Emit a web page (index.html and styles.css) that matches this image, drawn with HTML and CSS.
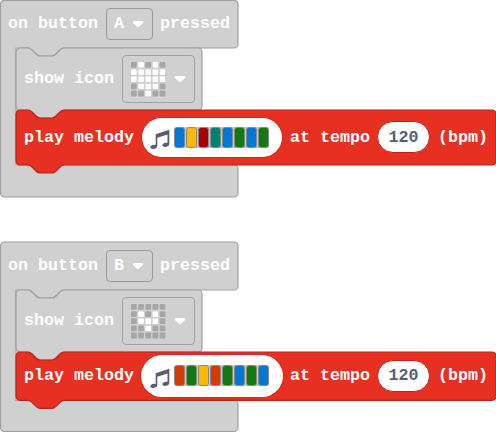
FILE: index.html
```
<!DOCTYPE html>
<html lang="en">
<head>
<meta charset="utf-8">
<title>Button melodies</title>
<link rel="stylesheet" href="styles.css">
</head>
<body>
<svg class="defs" width="0" height="0" aria-hidden="true">
  <defs>
    <symbol id="arrow" viewBox="0 0 12 8"><path d="M2 1H10Q12 1.200 11 2.900L7.600 6.300Q6 7.600 4.400 6.300L1 2.900Q0 1.200 2 1Z" fill="#fff"/></symbol>
    <symbol id="note" viewBox="0 0 20 21"><path d="M5.700 5.200 19.300.8V15.100Q19 17.800 15.600 17.900C12.600 18 11.700 16.400 12.900 14.900Q14.500 13.200 17.500 13.800V5.500L7.300 8.800V17.100Q7.100 19.700 3.600 20C.3 20.200-.4 18.300.9 16.900Q2.600 15.300 5.700 15.900Z" fill="#575e75"/></symbol>
    <rect id="led" width="5.800" height="5.800" rx="1"/>
    <g id="row"><use href="#led"/><use href="#led" x="7.150"/><use href="#led" x="14.300"/><use href="#led" x="21.450"/><use href="#led" x="28.600"/></g>
    <g id="grid" fill="#a6a6a6"><use href="#row"/><use href="#row" y="7.150"/><use href="#row" y="14.300"/><use href="#row" y="21.450"/><use href="#row" y="28.600"/></g>
  </defs>
</svg>
<main class="workspace">
  <section class="event first">
    <svg class="shape" width="240" height="198"><path d="M.5 4.300a4 4 0 0 1 4-4H234a4 4 0 0 1 4 4V44a4 4 0 0 1-4 4H64c-2 0-3 1-4 2l-4 4c-1 1-2 2-4 2H40c-2 0-3-1-4-2l-4-4c-1-1-2-2-4-2H16V165H234a4 4 0 0 1 4 4V193a4 4 0 0 1-4 4H4.500a4 4 0 0 1-4-4Z"/></svg>
    <header class="head"><span class="label">on button</span><span class="select"><span>A</span><svg class="arrow"><use href="#arrow"/></svg></span><span class="label">pressed</span></header>
    <div class="body">
      <div class="block icon-block">
        <svg class="shape" width="188" height="72"><path d="M0 4a4 4 0 0 1 4-4H12c2 0 3 1 4 2l4 4c1 1 2 2 4 2h12c2 0 3-1 4-2l4-4c1-1 2-2 4-2H182a4 4 0 0 1 4 4V58a4 4 0 0 1-4 4H48c-2 0-3 1-4 2l-4 4c-1 1-2 2-4 2H24c-2 0-3-1-4-2l-4-4c-1-1-2-2-4-2H4a4 4 0 0 1-4-4Z"/></svg>
        <span class="label">show icon</span>
        <span class="picker"><svg class="leds" viewBox="0 0 35 35"><use href="#grid"/><g fill="#fff"><use href="#led" x="7.150"/><use href="#led" x="21.450"/><use href="#row" y="7.150"/><use href="#row" y="14.300"/><use href="#led" x="7.150" y="21.450"/><use href="#led" x="14.300" y="21.450"/><use href="#led" x="21.450" y="21.450"/><use href="#led" x="14.300" y="28.600"/></g></svg><svg class="arrow"><use href="#arrow"/></svg></span>
      </div>
      <div class="block melody">
        <svg class="shape" width="481" height="65"><path d="M0 4a4 4 0 0 1 4-4H12c2 0 3 1 4 2l4 4c1 1 2 2 4 2h12c2 0 3-1 4-2l4-4c1-1 2-2 4-2H476a4 4 0 0 1 4 4V51a4 4 0 0 1-4 4H48c-2 0-3 1-4 2l-4 4c-1 1-2 2-4 2H24c-2 0-3-1-4-2l-4-4c-1-1-2-2-4-2H4a4 4 0 0 1-4-4Z"/></svg>
        <span class="label">play melody</span>
        <span class="tune"><svg class="note"><use href="#note"/></svg><span class="bars"><b class="blue"></b><b class="yellow"></b><b class="maroon"></b><b class="teal"></b><b class="blue"></b><b class="green"></b><b class="blue"></b><b class="green"></b></span></span>
        <span class="label">at tempo</span><span class="number">120</span><span class="label">(bpm)</span>
      </div>
    </div>
  </section>
  <section class="event second">
    <svg class="shape" width="240" height="192"><path d="M.5 4a4 4 0 0 1 4-4H234a4 4 0 0 1 4 4V44a4 4 0 0 1-4 4H64c-2 0-3 1-4 2l-4 4c-1 1-2 2-4 2H40c-2 0-3-1-4-2l-4-4c-1-1-2-2-4-2H16V158.500H234a4 4 0 0 1 4 4V185.500a4 4 0 0 1-4 4H4.500a4 4 0 0 1-4-4Z"/></svg>
    <header class="head"><span class="label">on button</span><span class="select"><span>B</span><svg class="arrow"><use href="#arrow"/></svg></span><span class="label">pressed</span></header>
    <div class="body">
      <div class="block icon-block">
        <svg class="shape" width="188" height="72"><path d="M0 4a4 4 0 0 1 4-4H12c2 0 3 1 4 2l4 4c1 1 2 2 4 2h12c2 0 3-1 4-2l4-4c1-1 2-2 4-2H182a4 4 0 0 1 4 4V58a4 4 0 0 1-4 4H48c-2 0-3 1-4 2l-4 4c-1 1-2 2-4 2H24c-2 0-3-1-4-2l-4-4c-1-1-2-2-4-2H4a4 4 0 0 1-4-4Z"/></svg>
        <span class="label">show icon</span>
        <span class="picker"><svg class="leds" viewBox="0 0 35 35"><use href="#grid"/><g fill="#fff"><use href="#led" x="7.150" y="7.150"/><use href="#led" x="21.450" y="7.150"/><use href="#led" x="7.150" y="14.300"/><use href="#led" x="14.300" y="14.300"/><use href="#led" x="21.450" y="14.300"/><use href="#led" x="14.300" y="21.450"/></g></svg><svg class="arrow"><use href="#arrow"/></svg></span>
      </div>
      <div class="block melody short">
        <svg class="shape" width="481" height="58"><path d="M0 4a4 4 0 0 1 4-4H12c2 0 3 1 4 2l4 4c1 1 2 2 4 2h12c2 0 3-1 4-2l4-4c1-1 2-2 4-2H476a4 4 0 0 1 4 4V44.300a4 4 0 0 1-4 4H48c-2 0-3 1-4 2l-4 4c-1 1-2 2-4 2H24c-2 0-3-1-4-2l-4-4c-1-1-2-2-4-2H4a4 4 0 0 1-4-4Z"/></svg>
        <span class="label">play melody</span>
        <span class="tune"><svg class="note"><use href="#note"/></svg><span class="bars"><b class="orange"></b><b class="green"></b><b class="yellow"></b><b class="orange"></b><b class="green"></b><b class="blue"></b><b class="green"></b><b class="blue"></b></span></span>
        <span class="label">at tempo</span><span class="number">120</span><span class="label">(bpm)</span>
      </div>
    </div>
  </section>
</main>
</body>
</html>
```
FILE: styles.css
```
* { box-sizing: border-box; }
body { margin: 0; background: #fff; overflow: hidden; }
.defs { position: absolute; }
.workspace {
  width: 496px;
  height: 432px;
  overflow: hidden;
  font: bold 16.667px/20px "Liberation Mono", monospace;
  color: #fff;
}
.event { position: relative; width: 238px; }
.first { height: 197px; margin-bottom: 45px; }
.second { height: 190px; }
.shape {
  position: absolute;
  left: 0;
  top: 0;
  overflow: visible;
  fill: #d0d0d0;
  stroke: #a0a0a0;
  stroke-width: 1.2;
}
.label { position: relative; white-space: pre; }
.head { display: flex; align-items: center; height: 48px; padding-left: 8px; }
.select {
  position: relative;
  display: flex;
  align-items: center;
  gap: 8px;
  width: 47px;
  height: 32px;
  margin: 0 7px 0 8px;
  padding-left: 7px;
  border: 1px solid #999;
  border-radius: 4px;
}
.arrow { width: 12px; height: 8px; flex: none; }
.body { padding-left: 16px; }
.block { position: relative; display: flex; align-items: center; padding-left: 8px; }
.icon-block { width: 186px; height: 62px; gap: 8px; }
.picker {
  position: relative;
  display: flex;
  align-items: center;
  gap: 8px;
  width: 73px;
  height: 48px;
  padding-left: 8px;
  border: 1px solid #a0a0a0;
  border-radius: 4px;
}
.leds { width: 35px; height: 35px; flex: none; }
.melody { width: 480px; height: 55px; }
.melody.short { height: 48px; }
.melody .shape { fill: #e63022; stroke: #b8261b; }
.tune {
  position: relative;
  display: flex;
  align-items: center;
  width: 140px;
  height: 39px;
  margin: 0 8px;
  padding-left: 8px;
  background: #fff;
  border-radius: 20px;
  box-shadow: 0 0 0 .5px #b8261b;
}
.short .tune { width: 142px; height: 42px; margin: 0 7px; padding-left: 9px; border-radius: 21px; }
.note { width: 20px; height: 21px; flex: none; margin: 4px 4px 0 0; }
.short .note { margin-top: 5px; }
.bars { display: flex; gap: 1px; margin-top: -1px; background: #c8c8c8; border-radius: 3px; }
.bars b { width: 11px; height: 21px; border: 1px solid #898989; border-radius: 3px; }
.blue { background: #0078d7; }
.yellow { background: #ffb900; }
.maroon { background: #a80000; }
.teal { background: #008272; }
.green { background: #107c10; }
.orange { background: #d83b01; }
.number {
  position: relative;
  width: 53px;
  height: 32px;
  margin: 0 8px 0 7px;
  line-height: 29px;
  text-align: center;
  color: #575e75;
  background: #fff;
  border: 1px solid #b8261b;
  border-radius: 16px;
}
.melody:not(.short) .number { top: -.5px; line-height: 31px; }
```
